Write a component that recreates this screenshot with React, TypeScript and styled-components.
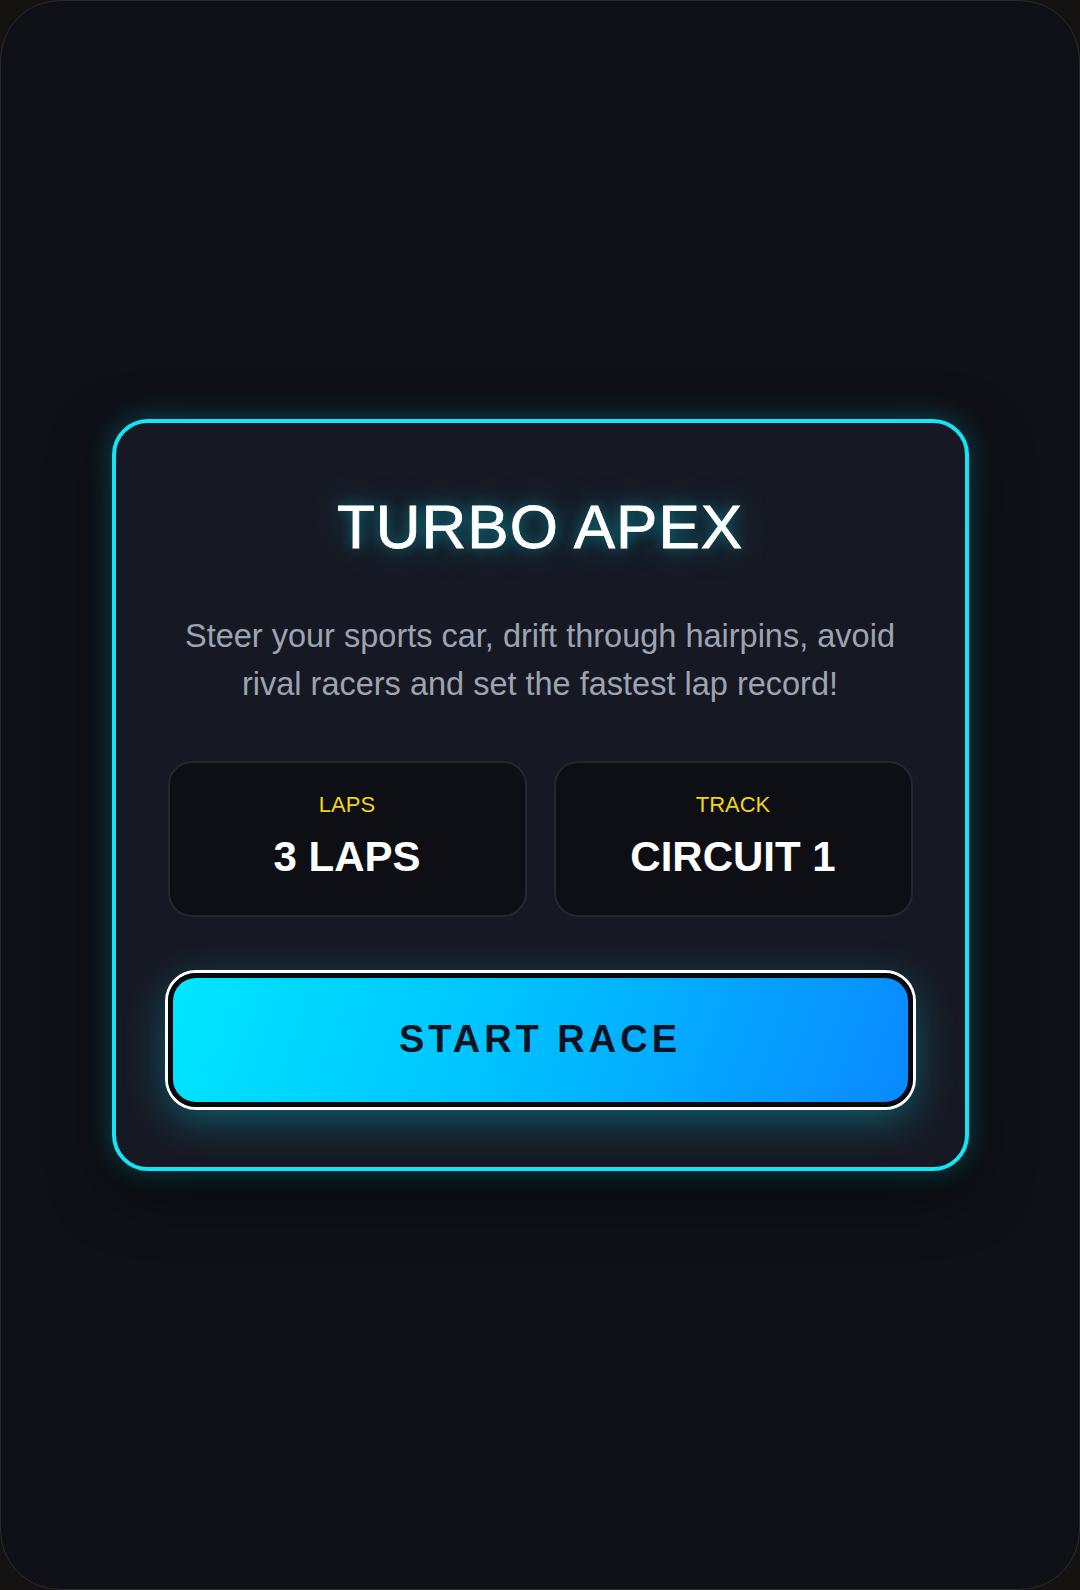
import styled, { createGlobalStyle } from "styled-components";

const GlobalStyle = createGlobalStyle`
  html, body {
    margin: 0;
    padding: 0;
    background: #141311;
  }
  * {
    box-sizing: border-box;
  }
`;

const Frame = styled.div`
  min-height: 100vh;
  display: flex;
  align-items: center;
  justify-content: center;
  background: #0f1117;
  border: 1px solid #2a2b2f;
  border-radius: 60px;
  overflow: hidden;
`;

const Card = styled.main`
  width: 857px;
  padding: 64px 52px 60px;
  display: flex;
  flex-direction: column;
  align-items: center;
  background: #161923;
  border: 4px solid #14e4f4;
  border-radius: 36px;
  box-shadow:
    0 0 28px rgba(0, 229, 255, 0.28),
    0 20px 60px rgba(0, 0, 0, 0.6);
`;

const Title = styled.h1`
  margin: 0;
  font-family: "Liberation Sans", Arial, sans-serif;
  font-weight: 400;
  font-size: 62px;
  line-height: 1.3;
  letter-spacing: 1px;
  color: #ffffff;
  -webkit-text-stroke: 0.8px #ffffff;
  text-shadow:
    0 0 14px rgba(0, 229, 255, 0.4),
    0 0 34px rgba(0, 229, 255, 0.35);
`;

const Description = styled.p`
  margin: 44px 0 0;
  max-width: 730px;
  font-family: "Liberation Sans", Arial, sans-serif;
  font-size: 32.5px;
  line-height: 48px;
  text-align: center;
  color: #9ea3b2;
`;

const Stats = styled.div`
  margin-top: 53px;
  width: 100%;
  display: grid;
  grid-template-columns: 1fr 1fr;
  gap: 27px;
`;

const Stat = styled.div`
  display: flex;
  flex-direction: column;
  align-items: center;
  padding: 27px 16px 32px;
  background: #0d0f15;
  border: 2px solid #24272f;
  border-radius: 24px;
`;

const StatLabel = styled.span`
  font-family: "Liberation Sans", Arial, sans-serif;
  font-size: 22px;
  line-height: 30px;
  color: #f2d60c;
`;

const StatValue = styled.span`
  margin-top: 11px;
  font-family: "Liberation Sans", Arial, sans-serif;
  font-weight: 700;
  font-size: 42px;
  line-height: 52px;
  color: #ffffff;
`;

const StartButton = styled.button`
  margin-top: 56px;
  width: 100%;
  height: 134px;
  border: 5px solid #07090d;
  border-radius: 28px;
  background: linear-gradient(110deg, #00e6ff 0%, #00c2ff 45%, #0a88ff 100%);
  box-shadow:
    0 0 0 3px #ffffff,
    0 12px 40px rgba(0, 229, 255, 0.35);
  font-family: "Liberation Sans", Arial, sans-serif;
  font-weight: 700;
  font-size: 38px;
  letter-spacing: 4px;
  color: #0b1220;
  cursor: pointer;
`;

const stats = [
  { label: "LAPS", value: "3 LAPS" },
  { label: "TRACK", value: "CIRCUIT 1" },
];

export default function App() {
  return (
    <>
      <GlobalStyle />
      <Frame>
        <Card>
          <Title>TURBO APEX</Title>
          <Description>
            Steer your sports car, drift through hairpins, avoid rival racers
            and set the fastest lap record!
          </Description>
          <Stats>
            {stats.map((s) => (
              <Stat key={s.label}>
                <StatLabel>{s.label}</StatLabel>
                <StatValue>{s.value}</StatValue>
              </Stat>
            ))}
          </Stats>
          <StartButton>START RACE</StartButton>
        </Card>
      </Frame>
    </>
  );
}
